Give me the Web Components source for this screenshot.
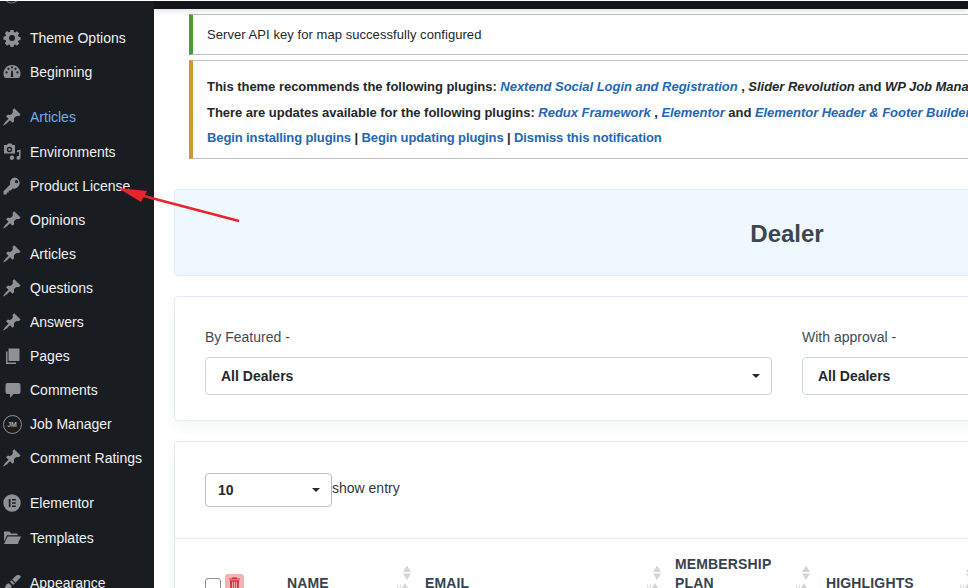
<!DOCTYPE html>
<html>
<head>
<meta charset="utf-8">
<style>
html, body { margin: 0; height: 100%; overflow: hidden; background: #fff; }
body { font-family: "Liberation Sans", Arial, sans-serif; }
</style>
</head>
<body>
<admin-page></admin-page>
<script>
// wp admin menu icons, 20x20 box
const icons = {
    gear: '<path d="M8.300 1h3.400l.4 2.400 1.500.6 2-1.400 2.400 2.400-1.400 2 .6 1.500 2.300.4v3.400l-2.300.4-.6 1.500 1.400 2-2.400 2.400-2-1.400-1.500.6-.4 2.300H8.300l-.4-2.300-1.500-.6-2 1.400L2 15.800l1.400-2-.6-1.500-2.300-.4V8.500l2.300-.4.6-1.500L2 4.600 4.400 2.200l2 1.400 1.500-.6zM10 6.800a3.300 3.300 0 1 0 0 6.600 3.300 3.300 0 0 0 0-6.600z" fill-rule="evenodd" transform="translate(1 1) scale(.9)"/>',
    gauge: '<path fill-rule="evenodd" d="M10 3a8.500 8.500 0 0 0-7.600 12.300c.2.4.6.7 1 .7h13.200c.4 0 .8-.3 1-.7A8.500 8.500 0 0 0 10 3zM4.500 11.500a1.100 1.100 0 1 1 0-2.200 1.100 1.100 0 0 1 0 2.200zm2-3.600a1.100 1.100 0 1 1 0-2.200 1.100 1.100 0 0 1 0 2.200zM10 6.400a1.100 1.100 0 1 1 0-2.200 1.100 1.100 0 0 1 0 2.200zm1.200 8.600H8.800l.5-6.500h1.400zm2.300-7.100a1.100 1.100 0 1 1 0-2.200 1.100 1.100 0 0 1 0 2.200zm2 3.600a1.100 1.100 0 1 1 0-2.200 1.100 1.100 0 0 1 0 2.200z"/>',
    pin: '<path d="M10.440 3.020l1.820-1.820 6.360 6.350-1.830 1.820c-1.050-.68-2.480-.57-3.410.36l-.75.75c-.92.93-1.040 2.350-.35 3.410l-1.830 1.820-2.410-2.410-2.800 2.790c-.42.42-3.380 2.710-3.800 2.290s1.860-3.390 2.280-3.810l2.790-2.790L4.100 9.360l1.830-1.820c1.050.69 2.480.57 3.400-.36l.75-.75c.93-.92 1.050-2.350.36-3.410z"/>',
    media: '<path fill-rule="evenodd" d="M2 3h3l1-1.500h3.500L10.500 3h2.500v8.500H2zm5.500 1.800a2.700 2.700 0 1 0 0 5.400 2.700 2.700 0 0 0 0-5.400z"/><circle cx="7.500" cy="7.500" r="1.300"/><path d="M15 8.500l3.500-.9v8.200a2 2 0 1 1-1.500-1.900V9.700l-2 .5zM10 13.500a2.200 2.200 0 1 1-.1 4.400 2.200 2.200 0 0 1 .1-4.400z"/>',
    key: '<path fill-rule="evenodd" d="M13.200 1.500a5.300 5.300 0 0 0-5 7L1.500 15.200V18.500h3.300v-2h2v-2h2l1.900-1.900a5.300 5.300 0 1 0 2.500-11.100zm1.300 2.400a1.700 1.700 0 1 1 0 3.400 1.700 1.700 0 0 1 0-3.400z"/>',
    pages: '<path d="M6.500 2.500h11v12.500h-11z"/><path d="M4 5.500h1.500V16.500H14V18H4z"/>',
    comment: '<path d="M5 3h11a2 2 0 0 1 2 2v7a2 2 0 0 1-2 2h-5l-3.500 4v-4H5a2 2 0 0 1-2-2V5a2 2 0 0 1 2-2z" transform="translate(.5 0)"/>',
    elementor: '<path fill-rule="evenodd" d="M10 1.300a8.700 8.700 0 1 0 0 17.400 8.700 8.700 0 0 0 0-17.400zM6.800 6h1.700v8H6.800zm3.200 0h3.800v1.600H10zm0 3.200h3.800v1.600H10zm0 3.200h3.800V14H10z"/>',
    folder: '<path d="M2 3.500h5.500l1.500 2h6.500v1.700H5L2 13.500z"/><path d="M5.600 8.500H19l-3.200 7.500H2z"/>',
    brush: '<path d="M18.500 2.800c.8.8-.3 2.200-1.400 3.300l-3.600 3.600-3.300-3.300 3.600-3.600c1.100-1.100 3.400-1.300 4.700 0z"/><path d="M9.400 7.200l3.400 3.400-1.500 1.500-3.400-3.400z"/><path d="M7 10.200l2.800 2.800c-.4 2.400-3.300 4.900-8.300 4.800 1.800-1.300 1.300-3.600 2.300-5.600.7-1.200 2-1.800 3.200-2z"/>'
};

class MenuItem extends HTMLElement {
    constructor() {
        super();
        let root = this.attachShadow({mode: 'open'});
        let icon = this.getAttribute('icon');
        let art;
        if (icon === 'jm') {
            art = `<span class="jm">JM</span>`;
        } else {
            art = `<svg viewBox="0 0 20 20" width="20" height="20">${icons[icon]}</svg>`;
        }
        root.innerHTML = `
<style>
:host {
    display: flex;
    align-items: center;
    height: 34px;
    color: #eef0f2;
    font-size: 14px;
}
:host([active]) { color: #72aee6; margin-bottom: 1px; }
:host([tall]) { margin-bottom: 1px; }
.icon {
    width: 20px;
    height: 20px;
    margin: 0 8px 0 2px;
    display: flex;
    align-items: center;
    justify-content: center;
    flex: none;
}
svg { fill: #8d9094; display: block; }
.jm {
    box-sizing: border-box;
    width: 19px;
    height: 19px;
    border: 1px solid #8d9094;
    border-radius: 50%;
    color: #a7aaad;
    font-size: 7px;
    font-weight: bold;
    display: flex;
    align-items: center;
    justify-content: center;
}
</style>
<span class="icon">${art}</span>
<slot></slot>`;
    }
}
customElements.define("menu-item", MenuItem);

class AdminMenu extends HTMLElement {
    constructor() {
        super();
        let root = this.attachShadow({mode: 'open'});
        root.innerHTML = `
<style>
:host {
    display: block;
    width: 154px;
    flex: none;
    background: #191c21;
    box-sizing: border-box;
    overflow: hidden;
}
.clipped { display: block; margin-bottom: 17px; }
.gap { height: 11px; }
</style>
<!-- bottom of the icon scrolled away above Theme Options -->
<svg class="clipped" width="154" height="3" viewBox="0 0 154 3"><circle cx="11.500" cy="-6" r="8" fill="none" stroke="#6d7074" stroke-width="1.200"/></svg>
<menu-item icon="gear">Theme Options</menu-item>
<menu-item icon="gauge">Beginning</menu-item>
<div class="gap"></div>
<menu-item icon="pin" active>Articles</menu-item>
<menu-item icon="media">Environments</menu-item>
<menu-item icon="key">Product License</menu-item>
<menu-item icon="pin">Opinions</menu-item>
<menu-item icon="pin">Articles</menu-item>
<menu-item icon="pin">Questions</menu-item>
<menu-item icon="pin">Answers</menu-item>
<menu-item icon="pages">Pages</menu-item>
<menu-item icon="comment">Comments</menu-item>
<menu-item icon="jm">Job Manager</menu-item>
<menu-item icon="pin">Comment Ratings</menu-item>
<div class="gap"></div>
<menu-item icon="elementor" tall>Elementor</menu-item>
<menu-item icon="folder">Templates</menu-item>
<div class="gap"></div>
<menu-item icon="brush">Appearance</menu-item>`;
    }
}
customElements.define("admin-menu", AdminMenu);

class AdminNotice extends HTMLElement {
    constructor() {
        super();
        let root = this.attachShadow({mode: 'open'});
        root.innerHTML = `
<style>
:host {
    display: block;
    background: #fff;
    border: 1px solid #bdbfc3;
    border-left: 4px solid var(--accent, #46a02a);
    border-right: 0;
    padding: var(--pad, 13px 14px 12px);
    font-size: 13px;
    line-height: 14px;
    color: #24282c;
    letter-spacing: var(--track, .06px);
    white-space: nowrap;
}
</style>
<slot></slot>`;
    }
}
customElements.define("admin-notice", AdminNotice);

class DealerSelect extends HTMLElement {
    constructor() {
        super();
        let root = this.attachShadow({mode: 'open'});
        root.innerHTML = `
<style>
:host {
    display: flex;
    align-items: center;
    justify-content: space-between;
    box-sizing: border-box;
    height: var(--h, 38px);
    background: #fff;
    border: 1px solid var(--line, #cdd3da);
    border-radius: 4px;
    padding: 0 11px 0 var(--left, 15px);
    font-size: 14px;
    font-weight: bold;
    color: #25282c;
}
.caret {
    width: 0;
    height: 0;
    border-left: 4px solid transparent;
    border-right: 4px solid transparent;
    border-top: 4px solid #25282c;
}
</style>
<slot></slot>
<span class="caret"></span>`;
    }
}
customElements.define("dealer-select", DealerSelect);

class SortArrows extends HTMLElement {
    constructor() {
        super();
        let root = this.attachShadow({mode: 'open'});
        root.innerHTML = `
<style>
:host { display: block; width: 24px; height: 30px; flex: none; margin-top: 8px; }
svg { display: block; fill: #d3d4d6; }
</style>
<svg viewBox="0 0 24 30" width="24" height="30">
<path d="M10 9l4-6.500 4 6.500zM10 10.500h8l-4 6.500z"/>
<path d="M4 21.500h1.300v8H4zM6.800 21.500h1.300v8H6.800z" opacity=".7"/>
<path d="M8.500 26l3.500-6 3.500 6z"/>
</svg>`;
    }
}
customElements.define("sort-arrows", SortArrows);

class DealerHead extends HTMLElement {
    constructor() {
        super();
        let root = this.attachShadow({mode: 'open'});
        root.innerHTML = `
<style>
:host {
    display: flex;
    align-items: flex-start;
    height: 50px;
    padding: 16px 0 0 30px;
    font-size: 14px;
    line-height: 19px;
    font-weight: bold;
    letter-spacing: .15px;
    color: #36434e;
    white-space: nowrap;
}
.check {
    box-sizing: border-box;
    width: 16px;
    height: 16px;
    border: 1px solid #8c8f94;
    border-radius: 3px;
    background: #fff;
    margin: 23px 4px 0 0;
    flex: none;
}
.trash {
    width: 19px;
    height: 30px;
    margin: 19px 0 0 0;
    background: #f5b3b5;
    border-radius: 3px;
    display: flex;
    justify-content: center;
    padding-top: 3px;
    box-sizing: border-box;
    flex: none;
}
.trash svg { fill: #d8333b; display: block; }
.col { flex: none; box-sizing: border-box; }
.name { width: 106px; margin-left: 43px; padding-top: 19px; }
.email { width: 218px; margin-left: 8px; padding-top: 19px; }
.plan { width: 117px; margin-left: 8px; }
.high { width: 130px; margin-left: 10px; padding-top: 19px; }
</style>
<span class="check"></span>
<span class="trash"><svg viewBox="0 0 14 16" width="11" height="13"><path fill-rule="evenodd" d="M4.500 0h5l1 1.500H14V3H0V1.500h3.500zM1 4h12l-.8 12H1.800zm3 1.800v8.400h1.300V5.800zm2.400 0v8.400h1.200V5.800zm2.300 0v8.400H10V5.800z"/></svg></span>
<span class="col name">NAME</span>
<sort-arrows></sort-arrows>
<span class="col email">EMAIL</span>
<sort-arrows></sort-arrows>
<span class="col plan">MEMBERSHIP<br>PLAN</span>
<sort-arrows></sort-arrows>
<span class="col high">HIGHLIGHTS</span>
<sort-arrows></sort-arrows>`;
    }
}
customElements.define("dealer-head", DealerHead);

class AdminPage extends HTMLElement {
    constructor() {
        super();
        let root = this.attachShadow({mode: 'open'});
        root.innerHTML = `
<style>
:host {
    display: flex;
    position: relative;
    width: 968px;
    height: 588px;
    overflow: hidden;
    background: #fff;
    color: #25282c;
    box-sizing: border-box;
    padding-top: 1px;
}
main {
    flex: 1;
    min-width: 0;
    overflow: hidden;
}
.bar {
    height: 8px;
    background: #121519;
    box-shadow: 0 2px 5px rgba(0,0,0,.12);
}
.notices {
    width: 1000px;
    margin: 5px 0 0 35px;
    display: flex;
    flex-direction: column;
    gap: 5px;
}
.warn { --accent: #d0962f; --pad: 19px 14px 13px; --track: 0; }
.warn p { margin: 0 0 11.500px; font-weight: bold; letter-spacing: -.03px; }
.warn p:last-child { margin: 0; letter-spacing: -.11px; }
a { color: #2567b3; text-decoration: none; }
i { font-style: italic; }
.stack {
    width: 1226px;
    margin: 30px 0 0 20px;
    display: flex;
    flex-direction: column;
    gap: 20px;
}
.banner {
    height: 87px;
    box-sizing: border-box;
    padding-top: 2px;
    background: #eff8ff;
    border: 1px solid #dfedf8;
    border-radius: 4px;
    display: flex;
    align-items: center;
    justify-content: center;
    font-size: 24px;
    font-weight: bold;
    color: #3a4750;
}
.card {
    background: #fff;
    border: 1px solid #e0edf8;
    border-radius: 4px;
    box-shadow: 0 6px 14px rgba(40,60,80,.05);
}
.filters {
    box-sizing: border-box;
    height: 125px;
    padding: 32px 30px 0;
    display: grid;
    grid-template-columns: 567px 567px;
    column-gap: 30px;
}
label {
    display: block;
    font-size: 14px;
    line-height: 16px;
    color: #3f4a54;
    margin-bottom: 12px;
}
.table { height: 200px; }
.length {
    box-sizing: border-box;
    height: 97px;
    padding: 31px 30px 0;
    display: flex;
    align-items: flex-start;
    border-bottom: 1px solid #e0edf8;
    font-size: 14px;
    color: #30363c;
}
.length dealer-select { width: 127px; --h: 34px; --line: #bcbfc2; --left: 12px; }
.length span { line-height: 30px; }
svg.arrow {
    position: absolute;
    left: 0;
    top: 0;
    pointer-events: none;
}
</style>
<admin-menu></admin-menu>
<main>
    <div class="bar"></div>
    <div class="notices">
        <admin-notice>Server API key for map successfully configured</admin-notice>
        <admin-notice class="warn">
            <p>This theme recommends the following plugins: <a href="#"><i>Nextend Social Login and Registration</i></a> , <i>Slider Revolution</i> and <i>WP Job Manager</i>.</p>
            <p>There are updates available for the following plugins: <a href="#"><i>Redux Framework</i></a> , <a href="#"><i>Elementor</i></a> and <a href="#"><i>Elementor Header &amp; Footer Builder</i></a>.</p>
            <p><a href="#">Begin installing plugins</a> | <a href="#">Begin updating plugins</a> | <a href="#">Dismiss this notification</a></p>
        </admin-notice>
    </div>
    <div class="stack">
        <div class="banner">Dealer</div>
        <div class="card filters">
            <div><label>By Featured -</label><dealer-select>All Dealers</dealer-select></div>
            <div><label>With approval -</label><dealer-select>All Dealers</dealer-select></div>
        </div>
        <div class="card table">
            <div class="length"><dealer-select>10</dealer-select><span>show entry</span></div>
            <dealer-head></dealer-head>
        </div>
    </div>
</main>
<svg class="arrow" width="968" height="588" viewBox="0 0 968 588">
    <path d="M239 221L140 195" stroke="#e8242c" stroke-width="2.500" fill="none"/>
    <path d="M118 188L147 191L141 202z" fill="#e8242c"/>
</svg>`;
    }
}
customElements.define("admin-page", AdminPage);
</script>
</body>
</html>
